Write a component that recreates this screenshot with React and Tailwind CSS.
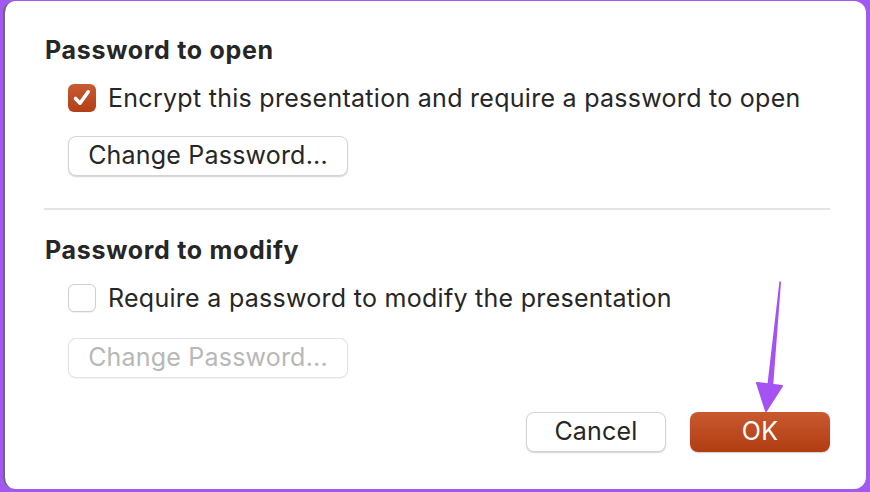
import React from 'react';

const font = { fontFamily: 'Inter, "Liberation Sans", sans-serif' };

const CheckBox = ({ checked }) =>
  checked ? (
    <span className="w-[28px] h-[28px] rounded-[6px] bg-gradient-to-b from-[#c85a32] to-[#b23f14] flex items-center justify-center shrink-0">
      <svg width="22" height="22" viewBox="0 0 22 22">
        <path d="M4.5 11.5 L9 16.2 L17.2 4.8" fill="none" stroke="white" strokeWidth="3.6" strokeLinecap="round" strokeLinejoin="round" />
      </svg>
    </span>
  ) : (
    <span className="w-[28px] h-[28px] rounded-[6px] bg-white border border-[#cfcfcf] shadow-[0_1px_1px_rgba(0,0,0,0.06)] shrink-0" />
  );

const MacButton = ({ children, disabled, className = '' }) => (
  <button
    className={`block h-[40px] rounded-[8px] bg-white text-[25px] tracking-[0.2px] border-[0.5px] ${
      disabled
        ? 'text-[#b8b8b8] border-[#e2e2e2] shadow-[0_0.5px_1px_rgba(0,0,0,0.05)]'
        : 'text-[#262626] border-[#d4d4d4] shadow-[0_1px_1.5px_rgba(0,0,0,0.18)]'
    } ${className}`}
  >
    {children}
  </button>
);

export default function App() {
  return (
    <div className="w-[870px] h-[492px] bg-[#a259f1] pt-[1px] pl-[3px] pr-[4px] pb-[3px]" style={font}>
      <div className="w-full h-full bg-white rounded-[12px] border-l-2 border-[#6b6b6b] relative">
        <div className="pl-[40px] pr-[36px] pt-[34px] text-[#262626]">
          <h2 className="text-[25px] font-bold leading-[30px] tracking-[0.7px]">Password to open</h2>
          <label className="flex items-center gap-[12px] ml-[23px] mt-[18px]">
            <CheckBox checked />
            <span className="text-[25px] leading-[30px] tracking-[0.28px]">Encrypt this presentation and require a password to open</span>
          </label>
          <MacButton className="w-[280px] ml-[23px] mt-[23px]">Change Password...</MacButton>

          <div className="h-[2px] bg-[#e4e4e4] mt-[32px] -ml-[1px]" />

          <h2 className="text-[25px] font-bold leading-[30px] tracking-[0.7px] mt-[25px]">Password to modify</h2>
          <label className="flex items-center gap-[12px] ml-[23px] mt-[18px]">
            <CheckBox />
            <span className="text-[25px] leading-[30px] tracking-[0.28px]">Require a password to modify the presentation</span>
          </label>
          <MacButton disabled className="w-[280px] ml-[23px] mt-[25px]">Change Password...</MacButton>

          <div className="flex justify-end gap-[24px] mt-[34px]">
            <MacButton className="w-[140px]">Cancel</MacButton>
            <button className="w-[140px] h-[40px] rounded-[8px] text-white text-[25px] tracking-[0.2px] bg-gradient-to-b from-[#c9592f] to-[#b13c10] shadow-[0_1px_1.5px_rgba(0,0,0,0.2)]">
              OK
            </button>
          </div>
        </div>

        <svg className="absolute left-[746px] top-[279px]" width="40" height="136" viewBox="0 0 40 136">
          <path d="M28.5 1 L30 2 L22 108 L16 108 Z" fill="#a552f2" />
          <path d="M6 103 L31 106 L15 131 Z" fill="#a552f2" strokeLinejoin="round" stroke="#a552f2" strokeWidth="2" />
        </svg>
      </div>
    </div>
  );
}
